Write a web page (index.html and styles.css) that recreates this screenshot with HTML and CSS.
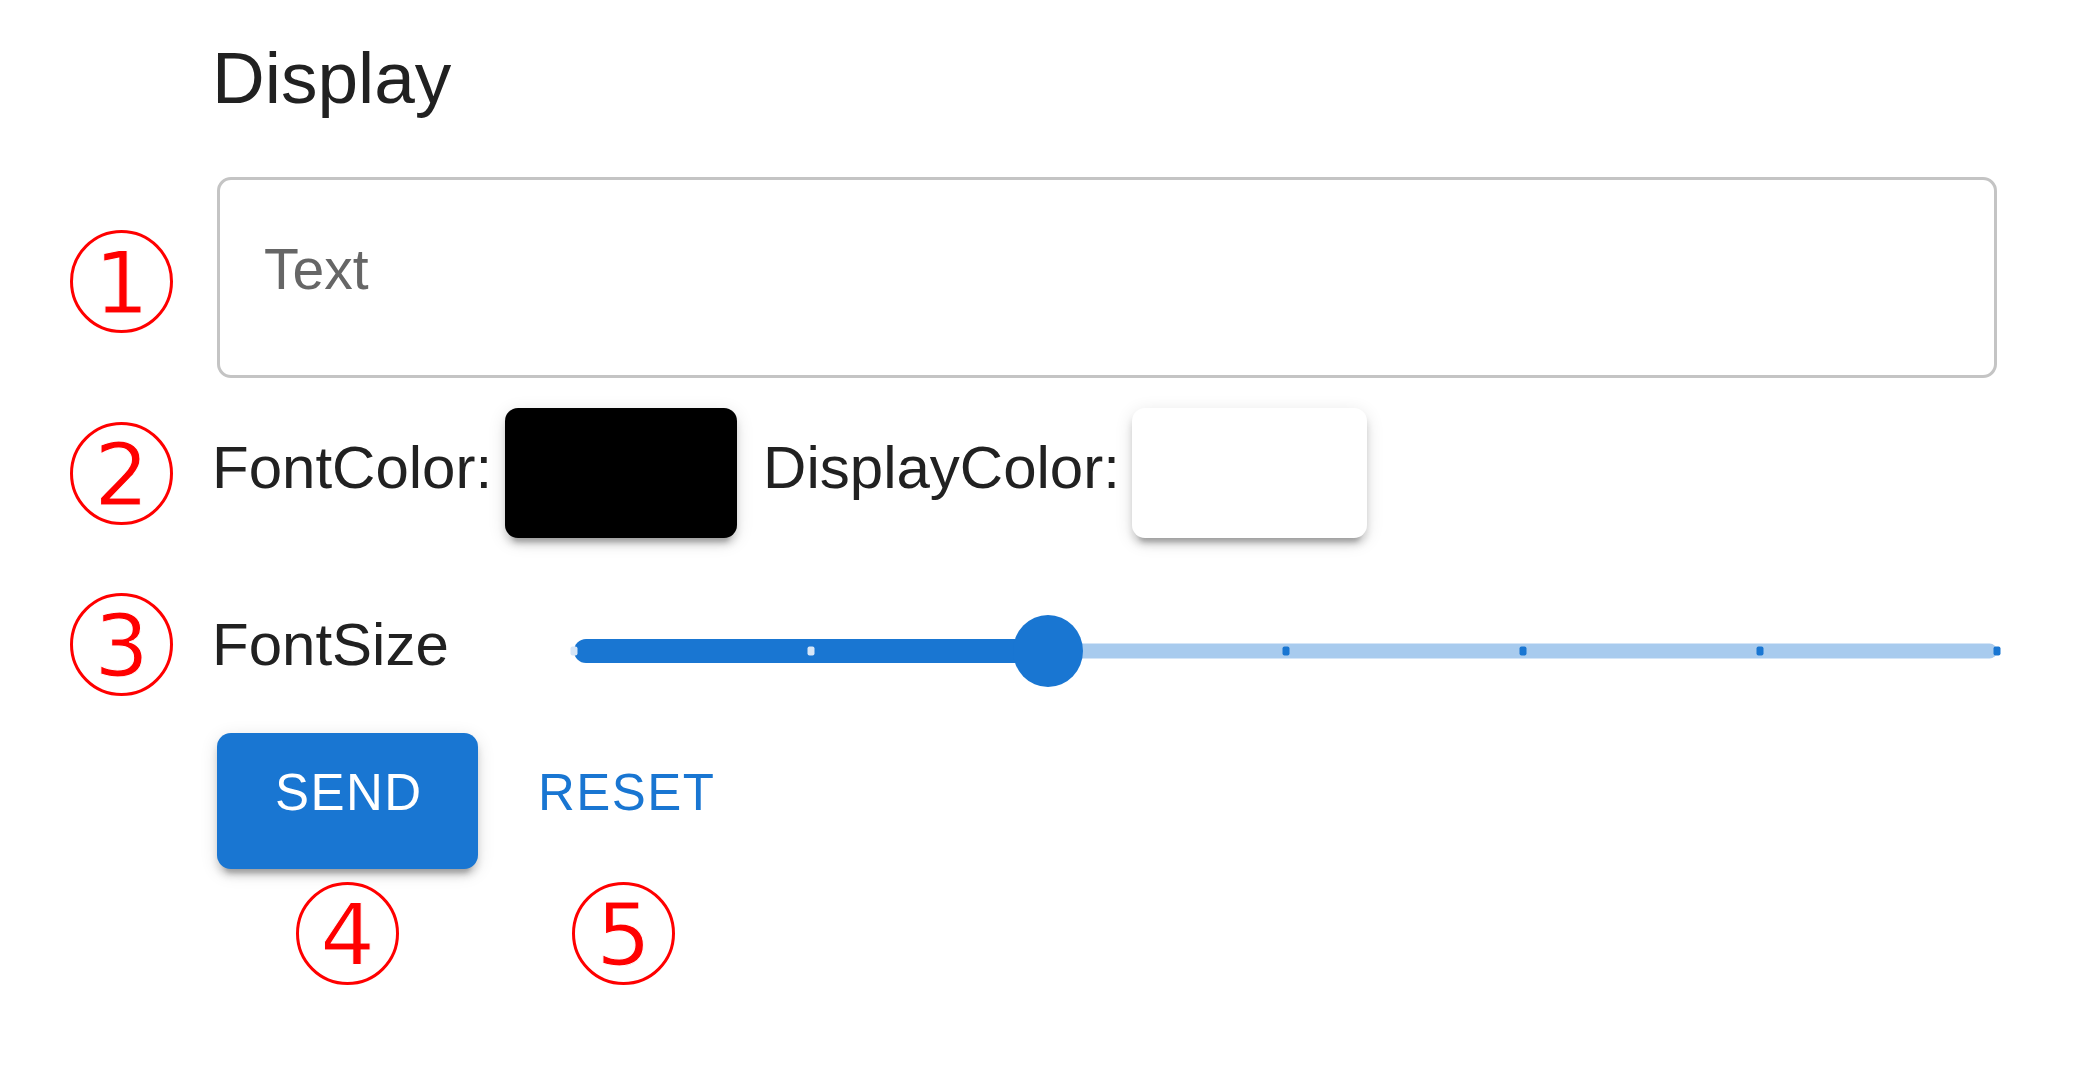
FILE: index.html
```html
<!DOCTYPE html>
<html lang="en">
<head>
<meta charset="utf-8">
<title>Display</title>
<link rel="stylesheet" href="styles.css">
</head>
<body>
<main class="page">
  <div class="row row-head">
    <span class="spacer"></span>
    <h1 class="title">Display</h1>
  </div>

  <div class="row row-input">
    <span class="num">1</span>
    <div class="field"><span class="field-label">Text</span></div>
  </div>

  <div class="row row-colors">
    <span class="num">2</span>
    <div class="colors">
      <span class="label label-font">FontColor:</span>
      <button class="swatch swatch-black" type="button" aria-label="Font color"></button>
      <span class="label label-display">DisplayColor:</span>
      <button class="swatch swatch-white" type="button" aria-label="Display color"></button>
    </div>
  </div>

  <div class="row row-size">
    <span class="num">3</span>
    <div class="size">
      <span class="label label-size">FontSize</span>
      <div class="slider">
        <span class="rail"></span>
        <span class="track" style="width:33.333%"></span>
        <span class="tick tick-on" style="left:0%"></span>
        <span class="tick tick-on" style="left:16.667%"></span>
        <span class="tick tick-on" style="left:33.333%"></span>
        <span class="tick" style="left:50%"></span>
        <span class="tick" style="left:66.667%"></span>
        <span class="tick" style="left:83.333%"></span>
        <span class="tick" style="left:100%"></span>
        <span class="thumb" style="left:33.333%"></span>
      </div>
    </div>
  </div>

  <div class="row row-buttons">
    <span class="spacer"></span>
    <div class="buttons">
      <button class="btn btn-send" type="button">Send</button>
      <button class="btn btn-reset" type="button">Reset</button>
    </div>
  </div>

  <div class="row row-notes">
    <span class="spacer"></span>
    <div class="notes">
      <span class="slot slot-send"><span class="num">4</span></span>
      <span class="slot slot-reset"><span class="num">5</span></span>
    </div>
  </div>
</main>
</body>
</html>
```

FILE: styles.css
```css
* { box-sizing: border-box; }

html, body {
  margin: 0;
  padding: 0;
  background: #ffffff;
}

body {
  font-family: "Liberation Sans", Arial, sans-serif;
  color: #212121;
}

.page {
  width: 2083px;
  height: 1074px;
  padding: 35px 0 0 70px;
  display: flex;
  flex-direction: column;
}

.row {
  display: flex;
  align-items: center;
  gap: 44px;
}

.spacer {
  flex: 0 0 103px;
}

/* annotation circles */
.num {
  flex: 0 0 103px;
  width: 103px;
  height: 103px;
  border: 3px solid #ff0000;
  border-radius: 50%;
  display: flex;
  align-items: center;
  justify-content: center;
  font-family: "DejaVu Sans", sans-serif;
  font-size: 86px;
  line-height: 1;
  color: #ff0000;
  -webkit-text-stroke: 1px #ffffff;
  padding-top: 3px;
}

/* heading */
.title {
  margin: 0 0 0 -5px;
  font-size: 73px;
  line-height: 85px;
  font-weight: 400;
  color: #212121;
}

/* text field */
.row-input {
  margin-top: 57px;
}

.row-input .num {
  margin-top: 8px;
}

.field {
  flex: 0 0 1780px;
  height: 201px;
  border: 3px solid #c4c4c4;
  border-radius: 14px;
  padding: 56px 0 0 44px;
}

.field-label {
  display: block;
  font-size: 57px;
  line-height: 66px;
  color: #666666;
}

/* color row */
.row-colors {
  margin-top: 30px;
  height: 130px;
}

.colors {
  display: flex;
  align-items: center;
  height: 130px;
}

.label {
  font-size: 60px;
  color: #212121;
  white-space: nowrap;
}

.colors .label {
  padding-bottom: 12px;
}

.label-font {
  margin-left: -5px;
}

.label-display {
  margin-left: 26px;
}

.swatch {
  border: 0;
  padding: 0;
  height: 130px;
  border-radius: 13px;
  box-shadow: 0 11px 4px -7px rgba(0,0,0,0.2), 0 7px 7px 0 rgba(0,0,0,0.14), 0 4px 18px 0 rgba(0,0,0,0.12);
}

.swatch-black {
  width: 232px;
  margin-left: 13px;
  background: #000000;
}

.swatch-white {
  width: 235px;
  margin-left: 12px;
  background: #ffffff;
}

/* font size row */
.row-size {
  margin-top: 55px;
}

.size {
  flex: 0 0 1780px;
  display: flex;
  align-items: center;
}

.label-size {
  flex: 0 0 362px;
  margin-left: -5px;
}

.slider {
  flex: 1;
  position: relative;
  height: 72px;
  margin-top: 13px;
}

.rail {
  position: absolute;
  left: 0;
  right: 0;
  top: 50%;
  height: 15px;
  transform: translateY(-50%);
  border-radius: 8px;
  background: #1976d2;
  opacity: 0.38;
}

.track {
  position: absolute;
  left: 0;
  top: 50%;
  height: 24px;
  transform: translateY(-50%);
  border-radius: 12px;
  background: #1976d2;
}

.tick {
  position: absolute;
  top: 50%;
  width: 7px;
  height: 9px;
  transform: translate(-50%, -50%);
  border-radius: 2px;
  background: #1976d2;
}

.tick-on {
  background: #d6e6f7;
}

.thumb {
  position: absolute;
  top: 50%;
  width: 70px;
  height: 72px;
  transform: translate(-50%, -50%);
  border-radius: 50%;
  background: #1976d2;
}

/* buttons */
.row-buttons {
  margin-top: 37px;
}

.buttons {
  display: flex;
  gap: 31px;
}

.btn {
  font-family: "Liberation Sans", Arial, sans-serif;
  font-size: 51px;
  line-height: 88px;
  letter-spacing: 0.02857em;
  text-transform: uppercase;
  border: 0;
  border-radius: 14px;
  padding: 16px 58px 32px;
  height: 136px;
  cursor: pointer;
}

.btn-send {
  width: 261px;
  background: #1976d2;
  color: #ffffff;
  box-shadow: 0 11px 4px -7px rgba(0,0,0,0.2), 0 7px 7px 0 rgba(0,0,0,0.14), 0 4px 18px 0 rgba(0,0,0,0.12);
}

.btn-reset {
  width: 229px;
  padding-left: 29px;
  padding-right: 29px;
  background: transparent;
  color: #1976d2;
}

/* annotation row under buttons */
.row-notes {
  margin-top: 13px;
}

.notes {
  display: flex;
  gap: 31px;
}

.slot {
  display: flex;
  justify-content: center;
}

.slot-send {
  width: 261px;
}

.slot-reset {
  width: 229px;
}
```
